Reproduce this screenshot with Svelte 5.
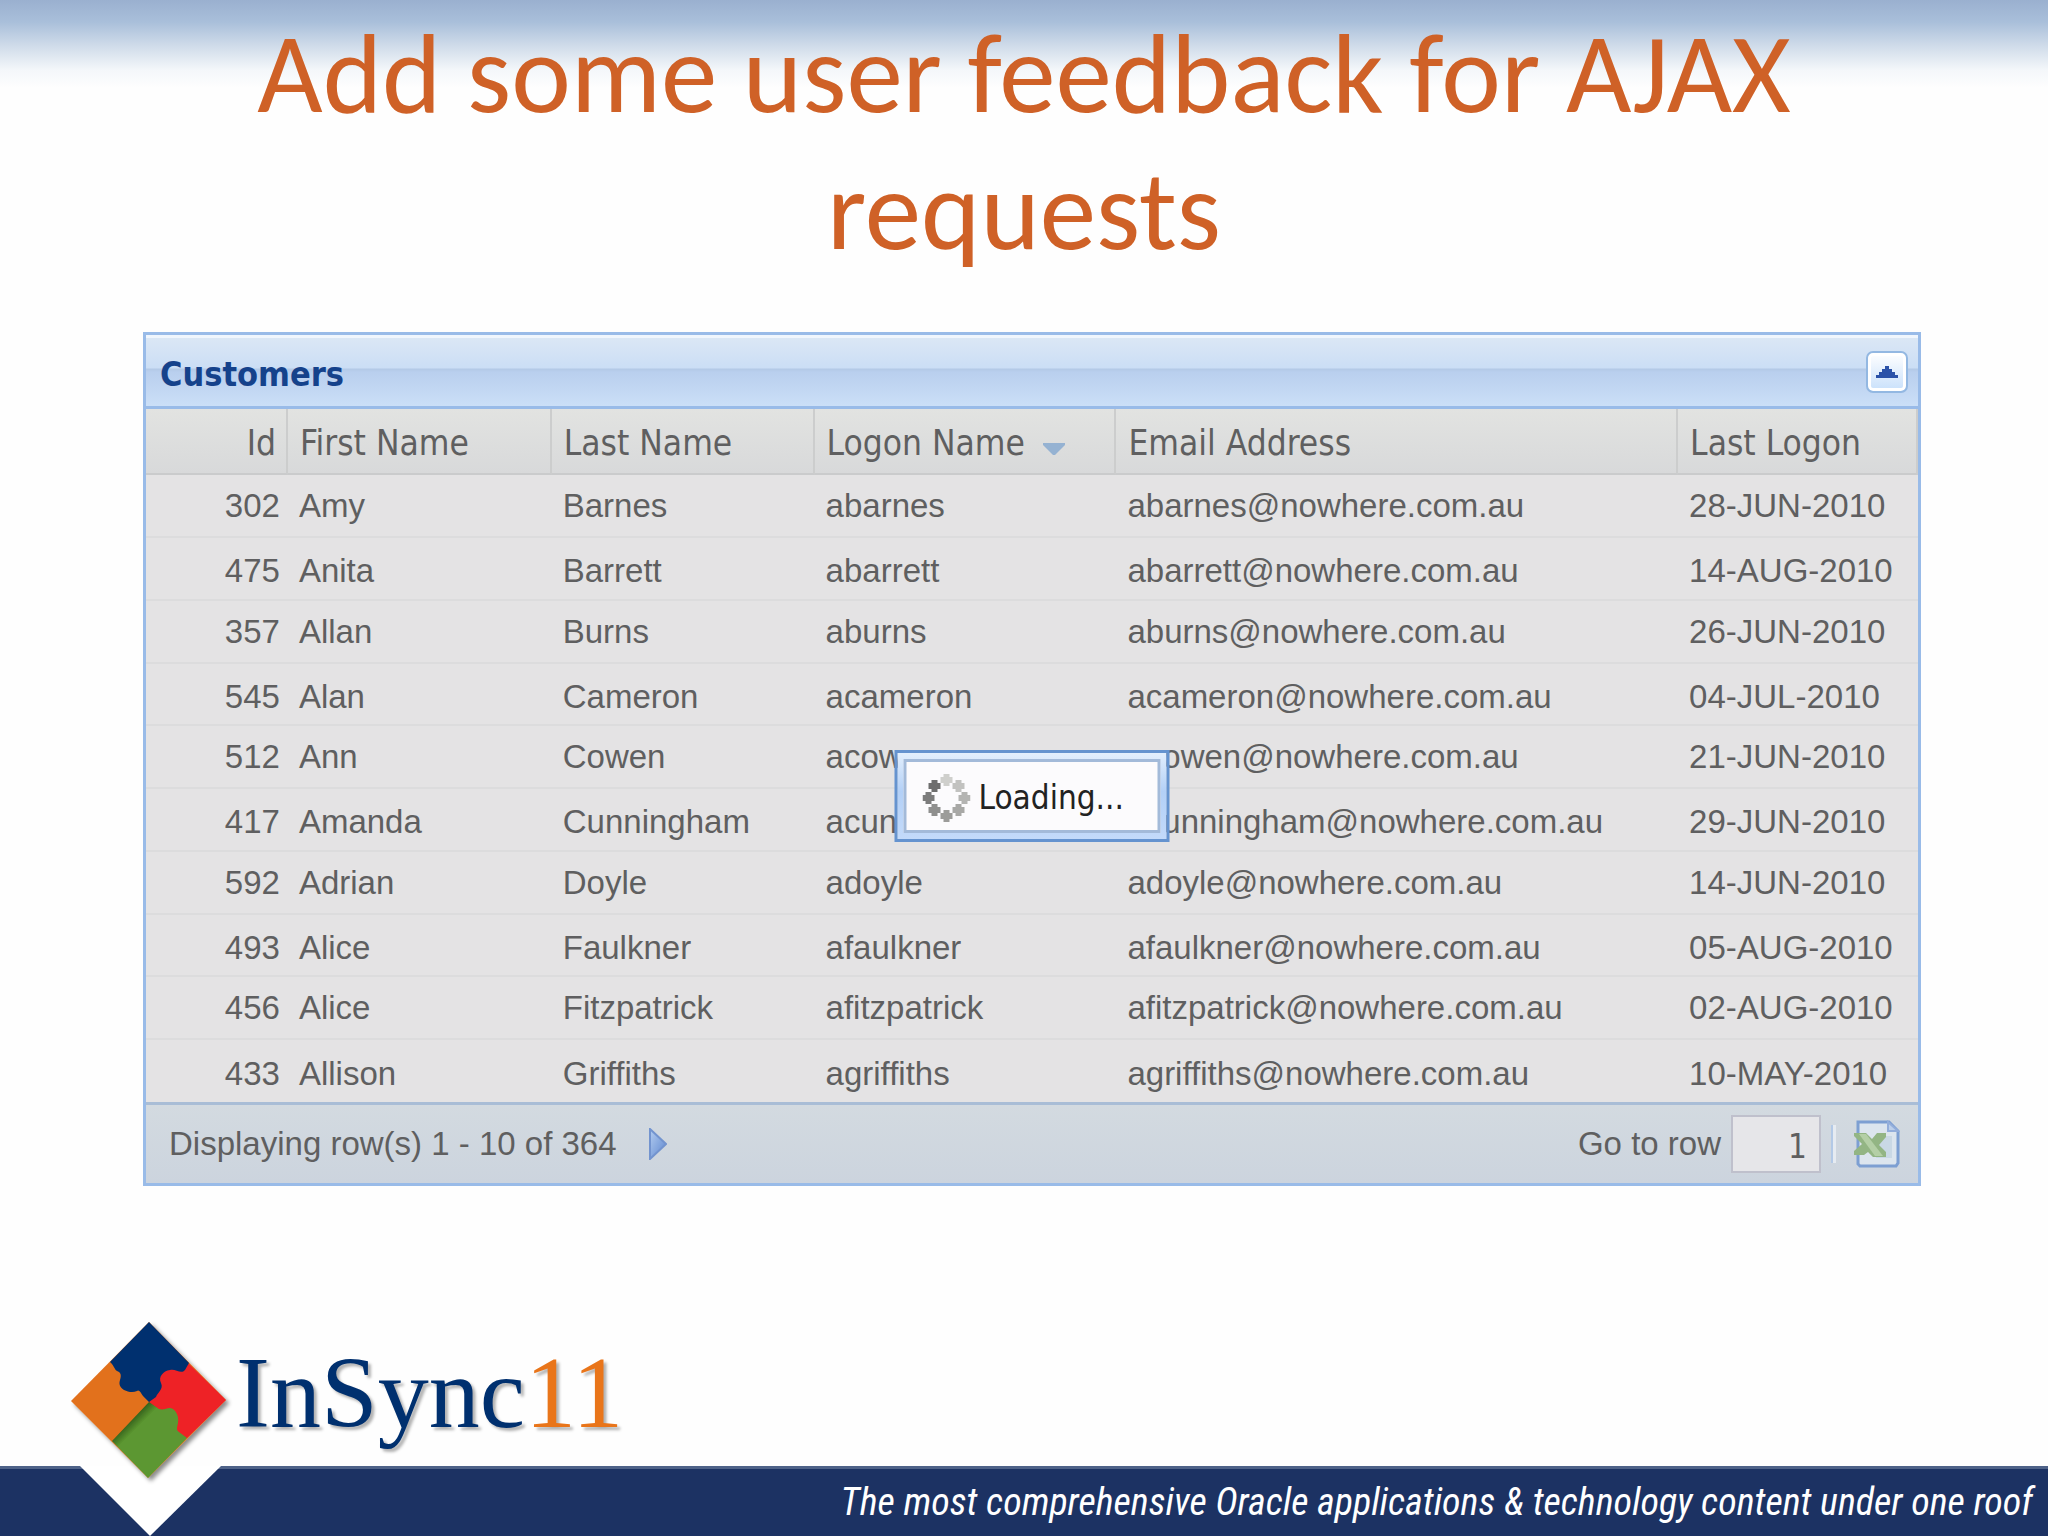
<script>
  const columns = [
    { key: 'id', label: 'Id', width: 142 },
    { key: 'first', label: 'First Name', width: 264 },
    { key: 'last', label: 'Last Name', width: 263 },
    { key: 'logon', label: 'Logon Name', width: 302, sorted: true },
    { key: 'email', label: 'Email Address', width: 562 },
    { key: 'date', label: 'Last Logon', width: 240 }
  ];
  const total = columns.reduce((sum, c) => sum + c.width, 0);

  const rows = [
    ['302', 'Amy', 'Barnes', 'abarnes', '28-JUN-2010'],
    ['475', 'Anita', 'Barrett', 'abarrett', '14-AUG-2010'],
    ['357', 'Allan', 'Burns', 'aburns', '26-JUN-2010'],
    ['545', 'Alan', 'Cameron', 'acameron', '04-JUL-2010'],
    ['512', 'Ann', 'Cowen', 'acowen', '21-JUN-2010'],
    ['417', 'Amanda', 'Cunningham', 'acunningham', '29-JUN-2010'],
    ['592', 'Adrian', 'Doyle', 'adoyle', '14-JUN-2010'],
    ['493', 'Alice', 'Faulkner', 'afaulkner', '05-AUG-2010'],
    ['456', 'Alice', 'Fitzpatrick', 'afitzpatrick', '02-AUG-2010'],
    ['433', 'Allison', 'Griffiths', 'agriffiths', '10-MAY-2010']
  ].map(([id, first, last, logon, date]) => ({
    id, first, last, logon, email: `${logon}@nowhere.com.au`, date
  }));

  // spinner dots, clockwise from the top
  const dots = [
    { x: 0, y: -18, fill: '#cfcfcc' },
    { x: 12, y: -12, fill: '#c2c2c0' },
    { x: 18, y: 0, fill: '#b4b4b2' },
    { x: 12, y: 12, fill: '#a8a8a6' },
    { x: 0, y: 18, fill: '#9c9c9a' },
    { x: -12, y: 12, fill: '#8f8f8e' },
    { x: -18, y: 0, fill: '#7c7c7c' },
    { x: -12, y: -12, fill: '#6e6e6e' }
  ];

  let collapsed = $state(false);
  let gotoRow = $state('1');
</script>

<div class="slide">
  <h1>Add some user feedback for AJAX requests</h1>

  <section class="panel">
    <header class="titlebar">
      <h2>Customers</h2>
      <button class="toggle" aria-label="Collapse" onclick={() => (collapsed = !collapsed)}>
        <svg width="22" height="12" viewBox="0 0 22 12">
          <path d="M9 0h4v3h3v3h3v3h3v3H0V9h3V6h3V3h3z" fill="#2b52a8" />
        </svg>
      </button>
    </header>

    {#if !collapsed}
      <div class="body">
        <table>
          <colgroup>
            {#each columns as col}
              <col style="width: {(col.width / total) * 100}%" />
            {/each}
          </colgroup>
          <thead>
            <tr>
              {#each columns as col}
                <th class:num={col.key === 'id'} scope="col">
                  {col.label}{#if col.sorted}<svg class="sort" width="22" height="12" viewBox="0 0 22 12">
                    <path d="M0 0h22v2L12 12h-2L0 2z" fill="#95b2d2" />
                  </svg>{/if}
                </th>
              {/each}
            </tr>
          </thead>
          <tbody>
            {#each rows as row}
              <tr>
                {#each columns as col}
                  <td class:num={col.key === 'id'}>{row[col.key]}</td>
                {/each}
              </tr>
            {/each}
          </tbody>
        </table>

        <footer class="pager">
          <span>Displaying row(s) 1 - 10 of 364</span>
          <button class="next" aria-label="Next page">
            <svg width="18" height="32" viewBox="0 0 18 32">
              <defs>
                <linearGradient id="arrow" x1="0" y1="0" x2="1" y2="1">
                  <stop offset="0" stop-color="#b4cdf0" />
                  <stop offset="1" stop-color="#5d86cf" />
                </linearGradient>
              </defs>
              <path d="M1 1L17 16L1 31z" fill="url(#arrow)" stroke="#7394cf" stroke-width="2" />
            </svg>
          </button>
          <label class="goto" for="goto-row">Go to row</label>
          <input id="goto-row" type="text" bind:value={gotoRow} />
          <i class="divider"></i>
          <button class="excel" aria-label="Export to Excel">
            <svg width="46" height="48" viewBox="0 0 46 48">
              <path d="M4 2h31l9 9v32l-2 3H6l-2-2z" fill="#dce5ee" stroke="#7d9fd2" stroke-width="3" />
              <path d="M34 2v9h10z" fill="#bccfea" stroke="#93aedb" stroke-width="2" />
              <path d="M22 16h16v22H22z" fill="#c9d8e5" />
              <path d="M0 13h12l6 6 5-6h9v4l-7 8 7 7v5H19l-5-5-4 3H0v-4l8-7-8-8z" fill="#93b584" />
              <path d="M5 14h7l17 22h-8z" fill="#b4cfa6" />
            </svg>
          </button>
        </footer>

        <div class="loading" role="status">
          <div class="message">
            <svg width="48" height="48" viewBox="-24 -24 48 48">
              {#each dots as dot}
                <path d="M-3-6h6v3h3v6h-3v3h-6v-3h-3v-6h3z" fill={dot.fill} transform="translate({dot.x} {dot.y})" />
              {/each}
            </svg>
            <span>Loading...</span>
          </div>
        </div>
      </div>
    {/if}
  </section>

  <footer class="brand">
    <svg class="mark" width="180" height="226" viewBox="0 0 180 226">
      <defs>
        <filter id="shade" x="-20%" y="-20%" width="140%" height="140%">
          <feDropShadow dx="3" dy="3" stdDeviation="2" flood-color="#000" flood-opacity=".45" />
        </filter>
        <linearGradient id="fold" gradientUnits="userSpaceOnUse" x1="70" y1="111" x2="77" y2="118">
          <stop offset="0" stop-color="#35621c" />
          <stop offset="1" stop-color="#5c9731" />
        </linearGradient>
      </defs>
      <path d="M20 156H161L90 226z" fill="#fff" />
      <g filter="url(#shade)">
        <path d="M89 12L166 90L88 168L11 91z" fill="#e2711d" />
        <path d="M89 92L52 131L88 168L127 128L124 90z" fill="url(#fold)" />
        <path d="M128 53L166 90L127 128L119 122C116 120 117 118 118 113C119 107 117 102 113 99C108 96 105 101 99 99L89 92L95 60z" fill="#ee2225" />
      </g>
      <path d="M89 12L129 53L125 60C121 65 115 58 110 60C103 61 98 67 101 73C104 79 97 83 96 87L89 92L83 86C81 83 79 79 77 81C73 83 68 82 64 80C59 77 59 73 60 70C62 64 60 62 57 61C54 59 54 55 50 52z" fill="#00306f" />
    </svg>
    <div class="wordmark">InSync<b>11</b></div>
    <p class="tagline">The most comprehensive Oracle applications &amp; technology content under one roof</p>
  </footer>
</div>

<style>
  :global(body) { margin: 0; }
  .slide {
    display: flex;
    flex-direction: column;
    min-height: 100vh;
    background: linear-gradient(#9ab0cf 0, #a9bfda 22px, #d3deeb 48px, #f4f7fa 70px, #fefefe 88px);
    font-family: "Liberation Sans", Arial, sans-serif;
    font-size: 33px;
    color: #5f5f60;
  }
  h1 {
    box-sizing: border-box;
    min-height: 332px;
    margin: 0;
    padding: 5px 200px 0;
    font: 400 113px/137px Carlito, Calibri, Lato, sans-serif;
    color: #cf6127;
    text-align: center;
  }
  button {
    display: flex;
    align-items: center;
    justify-content: center;
    padding: 0;
    border: none;
    background: none;
    cursor: pointer;
  }
  .panel {
    margin: 0 127px 0 143px;
    border: 3px solid #99bbe8;
  }
  .titlebar {
    display: flex;
    align-items: center;
    justify-content: space-between;
    box-sizing: border-box;
    height: 74px;
    padding: 0 10px 0 14px;
    border-top: 3px solid #f0f6fd;
    border-bottom: 3px solid #99bbe8;
    background: linear-gradient(#dbe7f5 0, #cbdef5 30px, #b3c9e6 31px, #b9cfee 34px, #cbdff7 100%);
  }
  h2 {
    margin: 0;
    padding-top: 4px;
    font: bold 34px/40px "DejaVu Sans Condensed", Tahoma, sans-serif;
    color: #15428b;
  }
  .toggle {
    box-sizing: border-box;
    width: 42px;
    height: 42px;
    border: 2px solid #93b8e2;
    border-radius: 7px;
    background: linear-gradient(#fff, #c8e0fb);
    box-shadow: inset 0 0 0 3px #fff;
  }
  .body { position: relative; }
  table {
    width: 100%;
    table-layout: fixed;
    border-collapse: separate;
    border-spacing: 0;
    background: #e4e3e4;
  }
  th, td {
    box-sizing: border-box;
    padding: 0 0 0 11px;
    text-align: left;
    white-space: nowrap;
  }
  th {
    height: 66px;
    padding: 4px 0 0 12px;
    border-right: 2px solid #cccdcd;
    border-bottom: 2px solid #cacbcc;
    background: linear-gradient(#e2e3e1, #d8d9da);
    font: 35px/44px "DejaVu Sans Condensed", Tahoma, sans-serif;
  }
  td {
    height: 63px;
    border-bottom: 2px solid #dcdcdd;
    line-height: 40px;
  }
  tbody tr:nth-child(even) td { padding-top: 5px; }
  tbody tr:nth-child(4n) td { height: 62px; }
  tbody tr:last-child td {
    height: 65px;
    border-bottom: 3px solid #a9bdd6;
  }
  .num { padding-right: 8px; text-align: right; }
  th.num { padding-right: 10px; }
  .sort { margin-left: 18px; }
  .pager {
    display: flex;
    align-items: center;
    box-sizing: border-box;
    height: 78px;
    padding: 0 18px 0 23px;
    background: linear-gradient(#d3dae0, #ccd4de);
  }
  .next { margin-left: 32px; }
  .goto { margin-left: auto; }
  input {
    box-sizing: border-box;
    width: 90px;
    height: 58px;
    margin: 0 10px;
    padding: 4px 12px 0;
    border: 2px solid #bfc0cc;
    border-radius: 0;
    background: #e6e6e9;
    font: 33px "DejaVu Sans Condensed", Tahoma, sans-serif;
    color: #5f5f60;
    text-align: right;
  }
  .divider {
    width: 2px;
    height: 38px;
    margin-right: 18px;
    border-right: 3px solid #e6ebf1;
    background: #b3c9e6;
  }
  .loading {
    position: absolute;
    top: 50%;
    left: 50%;
    padding: 6px;
    border: 3px solid #6593cf;
    background: linear-gradient(#e3effd, #b3d0f7 45%, #c3dafa);
    transform: translate(-50%, -50%);
  }
  .message {
    display: flex;
    align-items: center;
    gap: 8px;
    box-sizing: border-box;
    width: 257px;
    height: 74px;
    padding: 4px 0 0 16px;
    border: 3px solid #a3bad9;
    background: #fcfbfd;
    font: 33px/40px "DejaVu Sans Condensed", Tahoma, sans-serif;
    color: #222;
  }
  .brand {
    position: relative;
    margin-top: auto;
  }
  .mark {
    position: absolute;
    bottom: 0;
    left: 60px;
  }
  .wordmark {
    margin-left: 236px;
    font: 102px/112px "Liberation Serif", Garamond, serif;
    color: #00306f;
    text-shadow: 3px 3px 3px rgba(0, 0, 0, 0.3);
  }
  .wordmark b { font-weight: 400; color: #e9751a; }
  .tagline {
    margin: 17px 0 0;
    padding: 9px 15px 10px;
    border-top: 3px solid #4e6288;
    background: #1c3263;
    font: italic 38px/48px "Roboto Condensed", "Arial Narrow", "Liberation Sans", sans-serif;
    color: #fff;
    text-align: right;
  }
</style>
